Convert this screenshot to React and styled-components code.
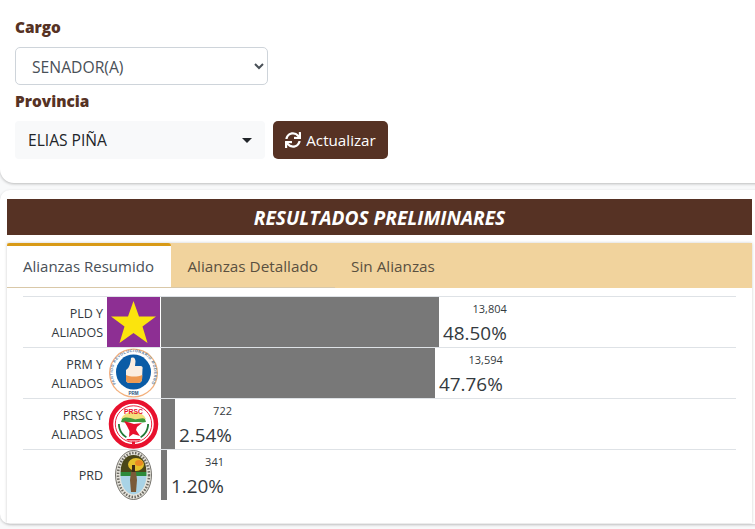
import React from 'react';
import styled, { createGlobalStyle } from 'styled-components';
import { FaSync } from 'react-icons/fa';

const BROWN = '#563224';

const GlobalStyle = createGlobalStyle`
  html, body {
    margin: 0;
    padding: 0;
    background: #f8f9fa;
    font-family: "Open Sans", "Liberation Sans", sans-serif;
    color: #212529;
  }
`;

const Page = styled.div`
  width: 755px;
  height: 529px;
  overflow: hidden;
  display: flex;
  flex-direction: column;
  gap: 7px;
`;

const FilterCard = styled.section`
  width: 775px;
  height: 183px;
  flex: none;
  box-sizing: border-box;
  background: #fff;
  border-radius: 0 0 14px 14px;
  box-shadow: 0 1px 3px rgba(0, 0, 0, 0.25);
  padding: 18px 15px 0;
`;

const FieldLabel = styled.div`
  font-size: 15.4px;
  font-weight: 800;
  line-height: 20px;
  color: ${BROWN};
  margin-bottom: ${(p) => p.$gap}px;
`;

const CargoSelect = styled.select`
  display: block;
  width: 253px;
  height: 38px;
  box-sizing: border-box;
  margin-bottom: 7px;
  padding: 1px 12px 0;
  border: 1px solid #ced4da;
  border-radius: 5px;
  background: #fff;
  color: #495057;
  font-family: inherit;
  font-size: 15.7px;
`;

const ProvinciaRow = styled.div`
  display: flex;
  gap: 8px;
`;

const ProvinciaButton = styled.div`
  width: 250px;
  height: 38px;
  box-sizing: border-box;
  display: flex;
  align-items: center;
  justify-content: space-between;
  padding: 0 13px;
  border-radius: 4px;
  background: #f8f9fa;
  color: #212529;
  font-size: 15.6px;
`;

const Caret = styled.span`
  width: 0;
  height: 0;
  border-left: 5px solid transparent;
  border-right: 5px solid transparent;
  border-top: 5px solid #212529;
`;

const RefreshButton = styled.button`
  width: 115px;
  height: 38px;
  display: flex;
  align-items: center;
  justify-content: center;
  gap: 5px;
  padding: 0;
  border: none;
  border-radius: 5px;
  background: ${BROWN};
  color: #fff;
  font-family: inherit;
  font-size: 15.2px;
`;

const ResultsCard = styled.section`
  width: 775px;
  height: 334px;
  flex: none;
  box-sizing: border-box;
  background: #fff;
  border-radius: 10px;
  box-shadow: 0 1px 3px rgba(0, 0, 0, 0.2);
  padding: 9px 23px 0 7px;
`;

const Banner = styled.h2`
  height: 36px;
  margin: 0 0 8px;
  display: flex;
  align-items: center;
  justify-content: center;
  background: ${BROWN};
  color: #fff;
  font-size: 19.2px;
  font-weight: 700;
  font-style: italic;
`;

const TabsPanel = styled.div`
  box-shadow: 0 0 3px rgba(0, 0, 0, 0.2);
  background: #fff;
  height: 280px;
`;

const TabBar = styled.div`
  display: flex;
  height: 45px;
  box-sizing: border-box;
  background: #f1d39d;
`;

const Tab = styled.div`
  display: flex;
  align-items: center;
  padding: ${(p) => (p.$active ? '0 17px 2px 16px' : '0 16.500px 2px')};
  font-size: ${(p) => (p.$active ? '15px' : '15.3px')};
  color: ${(p) => (p.$active ? '#495057' : '#5a5040')};
  background: ${(p) => (p.$active ? '#fff' : 'transparent')};
  border-top: ${(p) => (p.$active ? '3px solid #d89a17' : '3px solid transparent')};
  border-bottom: 1px solid #d9c8a8;
  border-radius: ${(p) => (p.$active ? '3px 3px 0 0' : '0')};
  &:last-child {
    border-bottom: none;
  }
`;

const Rows = styled.div`
  margin: 8px 16px 0;
`;

const Row = styled.div`
  display: flex;
  height: 51px;
  box-sizing: border-box;
  border-top: 1px solid #dee2e6;
`;

const PartyName = styled.div`
  width: 84px;
  box-sizing: border-box;
  padding: 1px 4px 0 0;
  display: flex;
  align-items: center;
  justify-content: flex-end;
  text-align: right;
  font-size: 12.5px;
  line-height: 19px;
  color: #343a40;
`;

const LogoBox = styled.div`
  width: 53px;
  height: 50px;
  margin-right: 1px;
  flex: none;
`;

const Bar = styled.div`
  height: 50px;
  background: #787878;
  flex: none;
`;

const Figures = styled.div`
  padding-left: 4px;
  text-align: right;
  color: #343a40;
`;

const Votes = styled.div`
  font-size: 11px;
  line-height: 14px;
  height: 18px;
  padding-top: 5px;
`;

const Percent = styled.div`
  font-size: 18.9px;
  line-height: 26px;
`;

const PldLogo = () => (
  <svg width="53" height="50" viewBox="0 0 53 50">
    <rect width="53" height="50" fill="#8d2f93" />
    <polygon
      points="26.5,4 32,19.5 49,19.5 35.5,29.5 40.5,46 26.5,36 12.5,46 17.5,29.5 4,19.5 21,19.5"
      fill="#fbe40d"
    />
  </svg>
);

const PrmLogo = () => (
  <svg width="53" height="50" viewBox="0 0 53 50">
    <defs>
      <path id="prmRing" d="M9 36a20.800 20.800 0 1 1 35 0" />
    </defs>
    <circle cx="26.500" cy="25" r="24.500" fill="#f3b07c" />
    <circle cx="26.500" cy="25" r="23.200" fill="#fff" />
    <circle cx="26.500" cy="24" r="17.500" fill="#0b5ca6" />
    <text fontSize="3.800" fontWeight="700" fill="#55789a" fontFamily="Liberation Sans">
      <textPath href="#prmRing" textLength="88" lengthAdjust="spacing">PARTIDO REVOLUCIONARIO MODERNO</textPath>
    </text>
    <path d="M24 10c3-1.500 4.500 .5 4.500 3.500L28 18h5.500c2 0 2.500 1.500 2 3l-.5 11c-.5 2-2 3-4 3h-8.500c-2 0-3.500-1-3.500-3V22c2.500-1.500 4.500-5 5-12z" fill="#fbeee0" />
    <path d="M19 27c5 2 11 2 16.300 0l-.3 5c-.5 2-2 3-4 3h-8.500c-2 0-3.500-1-3.500-3z" fill="#ee9a52" />
    <text x="26.500" y="46.500" textAnchor="middle" fontSize="4.500" fontWeight="700" fill="#2a4f7a" fontFamily="Liberation Sans">PRM</text>
  </svg>
);

const PrscLogo = () => (
  <svg width="53" height="50" viewBox="0 0 53 50">
    <circle cx="26.500" cy="25" r="22.500" fill="#fff" stroke="#e8112d" strokeWidth="4.500" />
    <circle cx="26.500" cy="25" r="18.200" fill="none" stroke="#e8112d" strokeWidth="0.900" />
    <path d="M14 20a13 10 0 0 1 25 0z" fill="#f2df7c" />
    <path d="M15 20c4-3 8-1 12 0s8-2 11 0l1 3c-3 1-7 0-12 0s-10 1-13 0z" fill="#3f9a3c" />
    <path d="M11 25c0 6 3 11 8 14l.8-1.500c-4-2.500-7-7-7-12.500zM42 25c0 6-3 11-8 14l-.8-1.500c4-2.500 7-7 7-12.500z" fill="#1f7a35" />
    <path d="M17 22l10 3 8-1-5 4-1 3 4 6-7-2-4 3 .5-6-2.500-5z" fill="#e8112d" />
    <text x="26.500" y="14.500" textAnchor="middle" fontSize="6.800" fontWeight="700" fill="#e8112d" fontFamily="Liberation Sans">PRSC</text>
    <path d="M19 40h15l-2 1.500H21z" fill="#e8112d" />
    <rect x="25" y="42.500" width="3" height="3" fill="#e8112d" />
  </svg>
);

const PrdLogo = () => (
  <svg width="53" height="50" viewBox="0 0 53 50">
    <ellipse cx="26.500" cy="25" rx="18" ry="24.500" fill="#e6e4dc" stroke="#55534c" strokeWidth="0.800" />
    <ellipse cx="26.500" cy="25" rx="15.500" ry="22" fill="none" stroke="#6d6b64" strokeWidth="2.500" strokeDasharray="1.500 1.500" />
    <ellipse cx="26.500" cy="25" rx="13" ry="19.500" fill="#a9d3e6" />
    <path d="M13.600 22c0-11 5.400-17 12.900-17s12.900 6 12.900 17z" fill="#4a4618" />
    <ellipse cx="29" cy="14.500" rx="8" ry="6.500" fill="#e4c02c" />
    <ellipse cx="32" cy="13" rx="4" ry="3" fill="#ea8a22" />
    <rect x="13.600" y="22" width="25.800" height="4" fill="#2c8a3a" />
    <path d="M24 22h5l1 8-1 12h-5l-1-12z" fill="#7a5a38" />
    <rect x="25" y="15" width="3" height="7" fill="#3a2a18" />
  </svg>
);

const parties = [
  { id: 'pld', name: ['PLD Y', 'ALIADOS'], Logo: PldLogo, bar: 278, votes: '13,804', pct: '48.50%' },
  { id: 'prm', name: ['PRM Y', 'ALIADOS'], Logo: PrmLogo, bar: 274, votes: '13,594', pct: '47.76%' },
  { id: 'prsc', name: ['PRSC Y', 'ALIADOS'], Logo: PrscLogo, bar: 14, votes: '722', pct: '2.54%' },
  { id: 'prd', name: ['PRD'], Logo: PrdLogo, bar: 6, votes: '341', pct: '1.20%' },
];

const tabs = ['Alianzas Resumido', 'Alianzas Detallado', 'Sin Alianzas'];

export default function App() {
  return (
    <Page>
      <GlobalStyle />
      <FilterCard>
        <FieldLabel $gap={9}>Cargo</FieldLabel>
        <CargoSelect defaultValue="SENADOR(A)">
          <option>SENADOR(A)</option>
        </CargoSelect>
        <FieldLabel $gap={9}>Provincia</FieldLabel>
        <ProvinciaRow>
          <ProvinciaButton>
            ELIAS PIÑA
            <Caret />
          </ProvinciaButton>
          <RefreshButton>
            <FaSync size={16} />
            Actualizar
          </RefreshButton>
        </ProvinciaRow>
      </FilterCard>
      <ResultsCard>
        <Banner>RESULTADOS PRELIMINARES</Banner>
        <TabsPanel>
          <TabBar>
            {tabs.map((t, i) => (
              <Tab key={t} $active={i === 0}>{t}</Tab>
            ))}
          </TabBar>
          <Rows>
            {parties.map(({ id, name, Logo, bar, votes, pct }) => (
              <Row key={id}>
                <PartyName>
                  <div>
                    {name.map((n) => (
                      <div key={n}>{n}</div>
                    ))}
                  </div>
                </PartyName>
                <LogoBox>
                  <Logo />
                </LogoBox>
                <Bar style={{ width: bar }} />
                <Figures>
                  <Votes>{votes}</Votes>
                  <Percent>{pct}</Percent>
                </Figures>
              </Row>
            ))}
          </Rows>
        </TabsPanel>
      </ResultsCard>
    </Page>
  );
}
